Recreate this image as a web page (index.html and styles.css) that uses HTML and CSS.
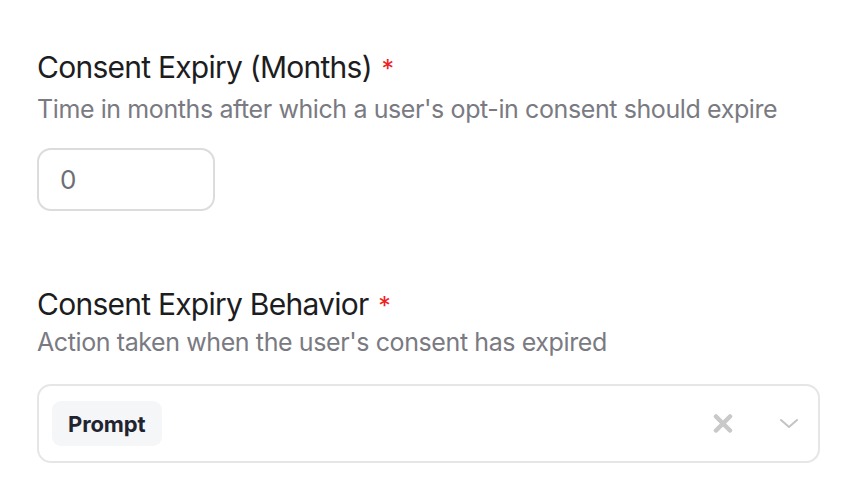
FILE: index.html
```html
<!DOCTYPE html>
<html>
<head>
<meta charset="utf-8">
<link rel="stylesheet" href="styles.css">
</head>
<body>
<div class="form">
  <div class="field">
    <div class="label">Consent Expiry (Months) <span class="req">*</span></div>
    <div class="desc">Time in months after which a user's opt-in consent should expire</div>
    <div class="input">0</div>
  </div>
  <div class="field second">
    <div class="label">Consent Expiry Behavior <span class="req">*</span></div>
    <div class="desc">Action taken when the user's consent has expired</div>
    <div class="select">
      <span class="tag">Prompt</span>
      <span class="spacer"></span>
      <svg class="clear" width="20" height="21" viewBox="0 0 20 21"><path d="M3 3.5 L17 17.5 M17 3.5 L3 17.5" stroke="#c9c9c9" stroke-width="4.5" stroke-linecap="round" fill="none"/></svg>
      <svg class="chev" width="20" height="11" viewBox="0 0 20 11"><path d="M2 2 L10 9 L18 2" stroke="#c4c4c4" stroke-width="2" stroke-linecap="round" stroke-linejoin="round" fill="none"/></svg>
    </div>
  </div>
</div>
</body>
</html>
```
FILE: styles.css
```css
html, body { margin: 0; padding: 0; background: #fff; }
body { font-family: Inter, "Noto Sans", sans-serif; }
.form { padding: 49px 0 0 37px; width: 783px; }
.label { font-size: 30px; color: #1d1d1f; letter-spacing: -0.75px; line-height: 36px; }
.req { color: #f01e1e; margin-left: 2px; font-size: 25px; line-height: 1; }
.desc { font-size: 25px; color: #7a7a82; letter-spacing: -0.4px; line-height: 30px; margin-top: 9px; }
.input { box-sizing: border-box; width: 178px; height: 63px; border: 2px solid #dcdcdc; border-radius: 14px; margin-top: 24px; padding-left: 21px; font-size: 26px; color: #6e6e76; display: flex; align-items: center; }
.second { margin-top: 75px; }
.second .desc { margin-top: 5px; }
.select { box-sizing: border-box; width: 783px; height: 79px; border: 2px solid #e6e6e6; border-radius: 14px; margin-top: 27px; display: flex; align-items: center; padding: 0 19px 0 13px; }
.tag { background: #f5f6f8; border-radius: 9px; font-weight: 700; font-size: 22px; color: #1f2430; padding: 0 16px; height: 45px; display: flex; align-items: center; letter-spacing: -0.1px; }
.spacer { flex: 1; }
.clear { margin-right: 46px; }
```
